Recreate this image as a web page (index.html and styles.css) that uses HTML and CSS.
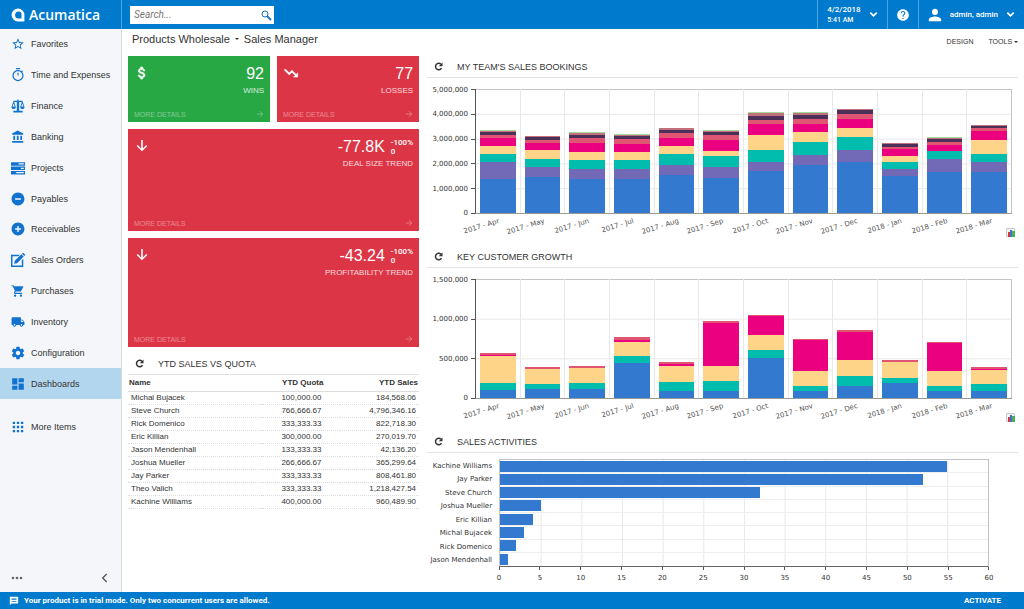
FILE: index.html
```html
<!DOCTYPE html>
<html lang="en">
<head>
    <meta charset="UTF-8">
    <meta name="viewport" content="width=device-width, initial-scale=1.0">
    <title>Sales Manager</title>
    <link rel="stylesheet" href="styles.css">
</head>
<body>
    <header class="topbar">
        <a class="logo" href="#">
            <svg class="logo-mark" viewBox="0 0 24 24"><path fill-rule="evenodd" d="M12 1a11 11 0 0 1 11 11v11H12A11 11 0 0 1 12 1zm1 5a6 6 0 1 0 0 12h5v-7a5 5 0 0 0-5-5z"/></svg>
            <span>Acumatica</span>
        </a>
        <form class="search">
            <input type="text" aria-label="Search" placeholder="Search...">
            <button type="button" aria-label="Search">
                <svg viewBox="0 0 12 12"><circle cx="5" cy="5" r="3"/><path d="M7 7l4 4"/></svg>
            </button>
        </form>
        <div class="topbar-right">
            <button class="top-item" type="button">
                <span class="clock"><span class="date">4/2/2018</span><span class="time">5:41 AM</span></span>
                <svg class="chevron" viewBox="0 0 10 10"><path d="M1.5 3L5 6.500 8.500 3"/></svg>
            </button>
            <button class="top-item help" type="button" aria-label="Help">
                <svg class="icon" viewBox="0 0 24 24"><path d="M12 2C6.480 2 2 6.480 2 12s4.480 10 10 10 10-4.480 10-10S17.520 2 12 2zm1 17h-2v-2h2v2zm2.070-7.750l-.9.920C13.450 12.900 13 13.500 13 15h-2v-.5c0-1.100.450-2.100 1.170-2.830l1.240-1.260c.370-.360.590-.860.590-1.410 0-1.100-.9-2-2-2s-2 .9-2 2H8c0-2.210 1.790-4 4-4s4 1.790 4 4c0 .880-.360 1.680-.930 2.250z"/></svg>
            </button>
            <button class="top-item user" type="button">
                <svg class="icon" viewBox="3 3 18 18"><path d="M12 12c2.210 0 4-1.790 4-4s-1.790-4-4-4-4 1.790-4 4 1.790 4 4 4zm0 2c-2.670 0-8 1.340-8 4v2h16v-2c0-2.660-5.330-4-8-4z"/></svg>
                <span>admin, admin</span>
                <svg class="chevron" viewBox="0 0 10 10"><path d="M1.5 3L5 6.500 8.500 3"/></svg>
            </button>
        </div>
    </header>

    <div class="layout">
        <nav class="sidebar">
            <ul class="menu">
                <li><a href="#"><svg viewBox="0 0 24 24"><path d="M22 9.240l-7.190-.620L12 2 9.190 8.630 2 9.240l5.460 4.730L5.820 21 12 17.270 18.180 21l-1.630-7.030L22 9.240zM12 15.400l-3.760 2.270 1-4.280-3.320-2.880 4.380-.380L12 6.100l1.710 4.040 4.380.380-3.320 2.880 1 4.280L12 15.400z"/></svg>Favorites</a></li>
                <li><a href="#"><svg viewBox="0 0 24 24"><path d="M15.500 0h-7v2.200h7V0zm3.530 6.890l1.420-1.420-1.410-1.410-1.420 1.420C16.070 4.240 14.120 3.500 12 3.500c-5.200 0-9.500 4.200-9.500 9.500s4.300 9.500 9.500 9.500 9.500-4.200 9.500-9.500c0-2.300-.8-4.500-2.470-6.110zM11 13h2V8h-2v5zm1 7.500c-4.100 0-7.500-3.400-7.500-7.500s3.400-7.500 7.500-7.500 7.500 3.400 7.500 7.500-3.400 7.500-7.500 7.500z"/></svg>Time and Expenses</a></li>
                <li><a href="#"><svg viewBox="0 0 24 24"><path d="M11 1h2v2h6.500l3.700 10.500c0 2.200-1.500 3.500-3.700 3.500s-3.700-1.300-3.700-3.500L18.600 5H14v15h6v3H4v-3h6V5H5.400l2.800 8.500c0 2.200-1.500 3.500-3.700 3.500S.8 15.700.8 13.500L4.500 3H11zM4.500 7.500l-2 5.500h4zm15 0l-2 5.500h4z"/></svg>Finance</a></li>
                <li><a href="#"><svg viewBox="0 0 24 24"><path d="M4 10v7h3v-7H4zm6 0v7h3v-7h-3zM2 22h19v-3H2v3zm14-12v7h3v-7h-3zm-4.500-9L2 6v2h19V6l-9.500-5z"/></svg>Banking</a></li>
                <li><a href="#"><svg viewBox="0 0 24 24"><path fill-rule="evenodd" d="M0 2h24v6H0zM13 4v2h9V4zM0 9.500h24v6H0zM17 11.500v2h5v-2zM0 17h24v6H0zM9 19v2h13v-2z"/></svg>Projects</a></li>
                <li><a href="#"><svg viewBox="0 0 24 24"><path d="M12 1C5.900 1 1 5.900 1 12s4.900 11 11 11 11-4.900 11-11S18.100 1 12 1zm5 12.200H7v-2.400h10v2.400z"/></svg>Payables</a></li>
                <li><a href="#"><svg viewBox="0 0 24 24"><path d="M12 1C5.900 1 1 5.900 1 12s4.900 11 11 11 11-4.900 11-11S18.100 1 12 1zm5 12.200h-3.800V17h-2.400v-3.800H7v-2.400h3.800V7h2.400v3.800H17v2.400z"/></svg>Receivables</a></li>
                <li><a href="#"><svg viewBox="0 0 24 24"><path d="M0 3h15l-2.500 2.500h-10v16h16v-9L21 10v14H0zM6.500 13.500L17.800 2.200l4 4L10.500 17.500 5.500 18.500zM18.800 1.200L20 0h1.500L24 2.500V4l-1.200 1.200z"/></svg>Sales Orders</a></li>
                <li><a href="#"><svg viewBox="0 0 24 24"><path d="M7 18c-1.100 0-1.990.9-1.990 2S5.900 22 7 22s2-.9 2-2-.9-2-2-2zM1 2v2h2l3.600 7.590-1.350 2.450c-.160.280-.250.610-.250.960 0 1.100.9 2 2 2h12v-2H7.420c-.140 0-.250-.110-.250-.250l.030-.120.9-1.630h7.450c.750 0 1.410-.410 1.750-1.030l3.580-6.490A1 1 0 0 0 20 4H5.210l-.940-2H1zm16 16c-1.100 0-1.990.9-1.990 2s.890 2 1.990 2 2-.9 2-2-.9-2-2-2z"/></svg>Purchases</a></li>
                <li><a href="#"><svg viewBox="0 0 24 24"><path d="M20 8h-3V4H3c-1.100 0-2 .9-2 2v11h2c0 1.660 1.340 3 3 3s3-1.340 3-3h6c0 1.660 1.340 3 3 3s3-1.340 3-3h2v-5l-3-4zM6 18.500c-.830 0-1.500-.670-1.500-1.500s.670-1.500 1.500-1.500 1.500.670 1.500 1.500-.670 1.500-1.500 1.500zm13.500-9l1.960 2.500H17V9.500h2.500zm-1.500 9c-.830 0-1.500-.670-1.500-1.500s.670-1.500 1.500-1.500 1.500.670 1.500 1.500-.670 1.500-1.500 1.500z"/></svg>Inventory</a></li>
                <li><a href="#"><svg viewBox="1 1 22 22"><path d="M19.430 12.980c.040-.320.070-.640.070-.980s-.030-.660-.070-.980l2.110-1.650c.190-.150.240-.420.120-.640l-2-3.460c-.120-.220-.390-.3-.610-.220l-2.490 1c-.520-.4-1.080-.730-1.690-.980l-.380-2.650C14.460 2.180 14.250 2 14 2h-4c-.250 0-.460.180-.490.420l-.380 2.650c-.610.250-1.170.590-1.690.980l-2.490-1c-.230-.090-.490 0-.610.220l-2 3.460c-.130.220-.070.490.120.640l2.110 1.650c-.040.320-.070.650-.070.980s.030.660.070.980l-2.110 1.650c-.190.150-.240.420-.120.640l2 3.460c.120.220.390.3.610.220l2.490-1c.520.4 1.080.730 1.690.980l.380 2.650c.030.240.240.420.490.420h4c.250 0 .460-.180.490-.420l.380-2.650c.610-.250 1.170-.590 1.690-.980l2.490 1c.230.090.490 0 .610-.220l2-3.460c.120-.220.070-.490-.120-.640l-2.110-1.650zM12 15.500c-1.930 0-3.500-1.570-3.500-3.500s1.570-3.500 3.500-3.500 3.500 1.570 3.500 3.500-1.570 3.500-3.500 3.500z"/></svg>Configuration</a></li>
                <li class="active"><a href="#"><svg viewBox="0 0 24 24"><path d="M2 13h9V2H2v11zm0 9h9v-7H2v7zm11 0h9V11h-9v11zm0-20v7h9V2h-9z"/></svg>Dashboards</a></li>
            </ul>
            <a class="more-items" href="#"><svg viewBox="0 0 24 24"><path d="M3 7h4V3H3v4zm7 14h4v-4h-4v4zm-7 0h4v-4H3v4zm0-7h4v-4H3v4zm7 0h4v-4h-4v4zm7-11v4h4V3h-4zm-7 4h4V3h-4v4zm7 7h4v-4h-4v4zm0 7h4v-4h-4v4z"/></svg>More Items</a>
            <div class="sidebar-bottom">
                <button type="button" aria-label="Menu settings"><svg viewBox="0 0 12 12"><circle cx="3" cy="6" r="1"/><circle cx="6" cy="6" r="1"/><circle cx="9" cy="6" r="1"/></svg></button>
                <button type="button" aria-label="Collapse"><svg class="collapse" viewBox="0 0 12 12"><path d="M8 3L5 6l3 3"/></svg></button>
            </div>
        </nav>

        <main class="content">
            <div class="titlebar">
                <a href="#">Products Wholesale</a>
                <span class="caret"></span>
                <h1>Sales Manager</h1>
                <div class="tools">
                    <a href="#">DESIGN</a>
                    <a href="#">TOOLS <span class="caret"></span></a>
                </div>
            </div>

            <div class="dashboard">
                <div class="column">
                    <div class="tiles">
                        <section class="tile green">
                            <svg class="tile-icon" viewBox="0 0 24 24"><path stroke="#fff" d="M11.800 10.900c-2.270-.590-3-1.200-3-2.150 0-1.090 1.010-1.850 2.700-1.850 1.780 0 2.440.850 2.500 2.100h2.210c-.070-1.720-1.120-3.300-3.210-3.810V3h-3v2.160c-1.940.420-3.500 1.680-3.500 3.610 0 2.310 1.910 3.460 4.700 4.130 2.500.6 3 1.480 3 2.410 0 .690-.490 1.790-2.700 1.790-2.060 0-2.870-.920-2.980-2.100h-2.200c.120 2.190 1.760 3.420 3.680 3.830V21h3v-2.150c1.950-.370 3.500-1.500 3.500-3.550 0-2.840-2.430-3.810-4.700-4.400z"/></svg>
                            <div class="value"><span class="number">92</span></div>
                            <h2>WINS</h2>
                            <a class="details" href="#">MORE DETAILS <svg viewBox="0 0 10 10"><path d="M1 5h7M5 1.500L8.500 5 5 8.500"/></svg></a>
                        </section>
                        <section class="tile">
                            <svg class="tile-icon" viewBox="0 0 24 24"><path stroke="#fff" d="M16 18l2.290-2.290-4.880-4.880-4 4L2 7.410 3.410 6l6 6 4-4 6.300 6.290L22 12v6z"/></svg>
                            <div class="value"><span class="number">77</span></div>
                            <h2>LOSSES</h2>
                            <a class="details" href="#">MORE DETAILS <svg viewBox="0 0 10 10"><path d="M1 5h7M5 1.500L8.500 5 5 8.500"/></svg></a>
                        </section>
                        <section class="tile wide deal">
                            <svg class="tile-icon" viewBox="0 0 24 24"><path d="M20 12l-1.600-1.600-5.200 5.200V3h-2.400v12.600l-5.200-5.200L4 12l8 8 8-8z"/></svg>
                            <div class="value"><span class="number">-77.8K</span><span class="delta">-100%<br>0</span></div>
                            <h2>DEAL SIZE TREND</h2>
                            <a class="details" href="#">MORE DETAILS <svg viewBox="0 0 10 10"><path d="M1 5h7M5 1.500L8.500 5 5 8.500"/></svg></a>
                        </section>
                        <section class="tile wide profit">
                            <svg class="tile-icon" viewBox="0 0 24 24"><path d="M20 12l-1.600-1.600-5.200 5.200V3h-2.400v12.600l-5.200-5.200L4 12l8 8 8-8z"/></svg>
                            <div class="value"><span class="number">-43.24</span><span class="delta">-100%<br>0</span></div>
                            <h2>PROFITABILITY TREND</h2>
                            <a class="details" href="#">MORE DETAILS <svg viewBox="0 0 10 10"><path d="M1 5h7M5 1.500L8.500 5 5 8.500"/></svg></a>
                        </section>
                    </div>

                    <section class="widget quota">
                        <header class="widget-header">
                            <button type="button" aria-label="Refresh"><svg viewBox="0 0 12 12"><path d="M10 8.300A4.300 4.300 0 1 1 9.300 3"/><path class="head" d="M11.300.5v5H6.300z"/></svg></button>
                            <h2>YTD SALES VS QUOTA</h2>
                        </header>
                        <table>
                            <thead>
                                <tr><th>Name</th><th>YTD Quota</th><th>YTD Sales</th></tr>
                            </thead>
                            <tbody>
                                <tr><td>Michal Bujacek</td><td>100,000.00</td><td>184,568.06</td></tr>
                                <tr><td>Steve Church</td><td>766,666.67</td><td>4,796,346.16</td></tr>
                                <tr><td>Rick Domenico</td><td>333,333.33</td><td>822,718.30</td></tr>
                                <tr><td>Eric Killian</td><td>300,000.00</td><td>270,019.70</td></tr>
                                <tr><td>Jason Mendenhall</td><td>133,333.33</td><td>42,136.20</td></tr>
                                <tr><td>Joshua Mueller</td><td>266,666.67</td><td>365,299.64</td></tr>
                                <tr><td>Jay Parker</td><td>333,333.33</td><td>808,461.80</td></tr>
                                <tr><td>Theo Valich</td><td>333,333.33</td><td>1,218,427.54</td></tr>
                                <tr><td>Kachine Williams</td><td>400,000.00</td><td>960,489.90</td></tr>
                            </tbody>
                        </table>
                    </section>
                </div>

                <div class="column">
                    <section class="widget bookings">
                        <header class="widget-header">
                            <button type="button" aria-label="Refresh"><svg viewBox="0 0 12 12"><path d="M10 8.300A4.300 4.300 0 1 1 9.300 3"/><path class="head" d="M11.300.5v5H6.300z"/></svg></button>
                            <h2>MY TEAM'S SALES BOOKINGS</h2>
                        </header>
                        <div class="chart" id="bookingsChart"></div>
                    </section>
                    <section class="widget growth">
                        <header class="widget-header">
                            <button type="button" aria-label="Refresh"><svg viewBox="0 0 12 12"><path d="M10 8.300A4.300 4.300 0 1 1 9.300 3"/><path class="head" d="M11.300.5v5H6.300z"/></svg></button>
                            <h2>KEY CUSTOMER GROWTH</h2>
                        </header>
                        <div class="chart" id="growthChart"></div>
                    </section>
                    <section class="widget">
                        <header class="widget-header">
                            <button type="button" aria-label="Refresh"><svg viewBox="0 0 12 12"><path d="M10 8.300A4.300 4.300 0 1 1 9.300 3"/><path class="head" d="M11.300.5v5H6.300z"/></svg></button>
                            <h2>SALES ACTIVITIES</h2>
                        </header>
                        <div class="hchart" id="activitiesChart"></div>
                    </section>
                </div>
            </div>
        </main>
    </div>

    <footer class="trial">
        <svg viewBox="0 0 24 24"><path d="M2 2h20v16H6l-4 4V2zm16 12v-2H6v2h12zm0-5V6H6v3h12z"/></svg>
        <span>Your product is in trial mode. Only two concurrent users are allowed.</span>
        <a href="#">ACTIVATE</a>
    </footer>

    <script src="script.js"></script>
</body>
</html>
```
FILE: styles.css
```css
* {
    box-sizing: border-box;
}
body {
    margin: 0;
    min-height: 100vh;
    display: flex;
    flex-direction: column;
    font-family: "Liberation Sans", Arial, sans-serif;
    font-size: 9px;
    color: #333;
    background-color: #fff;
}
a {
    color: inherit;
    text-decoration: none;
}
button {
    font: inherit;
    color: inherit;
    background: none;
    border: none;
    padding: 0;
    cursor: pointer;
}
h1, h2 {
    margin: 0;
    font-weight: normal;
}

/* top bar */
.topbar {
    display: flex;
    height: 29px;
    background-color: #007acc;
    color: #fff;
}
.logo {
    width: 122px;
    display: flex;
    align-items: center;
    gap: 4px;
    padding-left: 11px;
    border-right: 1px solid #4ea3dd;
    font-family: "Open Sans", sans-serif;
    font-size: 14px;
    font-weight: 600;
}
.logo-mark {
    width: 14px;
    height: 14px;
    fill: #fff;
}
.search {
    display: flex;
    align-items: center;
    align-self: center;
    width: 144px;
    height: 18px;
    margin-left: 8px;
    padding: 0 2px 0 4px;
    background-color: #fff;
}
.search input {
    flex: 1;
    min-width: 0;
    border: none;
    outline: none;
    padding: 0;
    font-family: Roboto, sans-serif;
    font-size: 10px;
    font-style: italic;
}
.search input::placeholder {
    color: #777;
}
.search button {
    display: flex;
}
.search svg {
    width: 12px;
    height: 12px;
    fill: none;
    stroke: #1b74c5;
    stroke-width: 1;
}
.search path {
    stroke-width: 2;
}
.topbar-right {
    display: flex;
    margin-left: auto;
    font-family: Roboto, sans-serif;
    font-size: 8px;
    font-weight: 500;
}
.top-item {
    display: flex;
    align-items: center;
    gap: 8px;
    padding: 0 9px;
    border-left: 1px solid #4ea3dd;
}
.top-item .icon {
    width: 14px;
    height: 14px;
    fill: #fff;
}
.help {
    padding: 0 8px;
}
.clock {
    display: flex;
    flex-direction: column;
    align-items: flex-start;
    line-height: 10px;
}
.time {
    font-size: 7px;
}
.chevron {
    width: 9px;
    height: 9px;
    fill: none;
    stroke: #fff;
    stroke-width: 2;
}

/* sidebar */
.layout {
    flex: 1;
    display: flex;
}
.sidebar {
    display: flex;
    flex-direction: column;
    width: 122px;
    background-color: #f4f6f9;
    border-right: 1px solid #d3dbe3;
}
.menu {
    display: grid;
    grid-auto-rows: 1fr;
    height: 370px;
    margin: 0;
    padding: 0;
    list-style: none;
}
.menu a, .more-items {
    display: flex;
    align-items: center;
    gap: 6px;
    height: 100%;
    padding-left: 11px;
}
.menu svg, .more-items svg {
    width: 14px;
    height: 14px;
    fill: #1173cf;
}
.menu .active {
    background-color: #b3d6ef;
}
.sidebar .more-items {
    height: 31px;
    margin-top: 12px;
}
.sidebar-bottom {
    display: flex;
    justify-content: space-between;
    margin-top: auto;
    padding: 6px 9px;
}
.sidebar-bottom button {
    display: flex;
}
.sidebar-bottom svg {
    width: 16px;
    height: 16px;
    fill: #666;
}
.sidebar-bottom .collapse {
    fill: none;
    stroke: #555;
}

/* page title */
.content {
    flex: 1;
    min-width: 0;
    padding: 0 6px;
}
.titlebar {
    display: flex;
    align-items: center;
    gap: 5px;
    height: 19px;
    margin-bottom: 8px;
    padding-left: 4px;
    font-size: 11px;
}
.titlebar h1 {
    font-size: 11px;
}
.caret {
    display: inline-block;
    border: 2px solid transparent;
    border-top-color: #333;
    border-bottom: none;
    vertical-align: middle;
}
.tools {
    display: flex;
    gap: 15px;
    margin-left: auto;
    padding-top: 6px;
    font-size: 7px;
}

/* dashboard */
.dashboard {
    display: grid;
    grid-template-columns: 33fr 67fr;
    gap: 8px;
}
.column {
    min-width: 0;
}
.tiles {
    display: grid;
    grid-template-columns: 1fr 1fr;
    gap: 7px;
}
.tile {
    display: grid;
    grid-template-columns: auto 1fr;
    grid-template-rows: 18px 12px 1fr;
    row-gap: 2px;
    min-height: 66px;
    padding: 9px 6px 4px;
    background-color: #dc3545;
    color: #fff;
}
.tile.green {
    background-color: #28a745;
}
.wide {
    grid-column: span 2;
}
.deal {
    min-height: 102px;
}
.profit {
    min-height: 109px;
}
.tile-icon {
    width: 16px;
    height: 16px;
    fill: #fff;
}
.value {
    display: flex;
    justify-content: flex-end;
    gap: 6px;
}
.number {
    font-size: 16px;
    line-height: 18px;
}
.delta {
    font-family: Roboto, sans-serif;
    font-size: 8px;
    font-weight: 500;
    line-height: 9px;
}
.tile h2 {
    grid-column: 1 / -1;
    font-size: 8px;
    line-height: 12px;
    text-align: right;
    opacity: 0.8;
}
.details {
    grid-column: 1 / -1;
    align-self: end;
    display: flex;
    align-items: center;
    justify-content: space-between;
    font-size: 7px;
    opacity: 0.4;
}
.details svg {
    width: 8px;
    height: 8px;
    fill: none;
    stroke: #fff;
}

/* widgets */
.widget-header {
    display: flex;
    align-items: center;
    gap: 14px;
    height: 22px;
    padding-left: 7px;
    border-bottom: 1px solid #e3e3e3;
}
.widget-header h2 {
    font-size: 9px;
}
.widget-header button {
    display: flex;
}
.widget-header svg {
    width: 9px;
    height: 9px;
    fill: none;
    stroke: #333;
    stroke-width: 2;
}
.widget-header .head {
    fill: #333;
    stroke: none;
}
.quota {
    margin-top: 6px;
}
.quota table {
    width: 100%;
    border-collapse: collapse;
    font-size: 8px;
}
.quota th, .quota td {
    width: 27%;
    text-align: right;
}
.quota th {
    height: 16px;
    padding: 0 1px;
    border-bottom: 1px solid #ddd;
}
.quota td {
    height: 13px;
    padding: 0 3px;
    line-height: 11px;
    border-bottom: 1px dotted #ddd;
}
.quota th:nth-child(2) {
    padding-right: 17px;
}
.quota td:nth-child(2) {
    padding-right: 19px;
}
.quota th:first-child, .quota td:first-child {
    width: 46%;
    text-align: left;
}

/* charts */
.chart, .hchart {
    font-family: "DejaVu Sans", Verdana, sans-serif;
    font-size: 7px;
    line-height: 8px;
}
.chart {
    position: relative;
    display: grid;
    grid-template-columns: 48px 1fr;
    padding: 11px 6px 0 0;
}
.bookings .chart {
    height: 168px;
    grid-template-rows: 125px 1fr;
}
.growth .chart {
    height: 163px;
    grid-template-rows: 120px 1fr;
}
.y-axis {
    display: flex;
    flex-direction: column;
    justify-content: space-between;
    margin: -4px 0;
}
.y-axis span {
    display: flex;
    align-items: center;
    justify-content: flex-end;
    gap: 3px;
    height: 9px;
}
.y-axis span::after {
    content: "";
    width: 4px;
    height: 1px;
    background-color: #555;
}
.plot {
    display: flex;
    border-left: 1px solid #555;
    border-bottom: 1px solid #999;
    background-image: linear-gradient(#e8e8e8 1px, transparent 1px);
    background-size: 100% calc(100% / var(--rows));
    box-shadow: inset 0 1px #c4c4c4;
}
.stack {
    flex: 1;
    display: flex;
    flex-direction: column-reverse;
    padding: 0 4px;
    border-right: 1px solid #e8e8e8;
}
.stack:last-child {
    border-right-color: #c4c4c4;
}
.blue { background-color: #3479d0; }
.purple { background-color: #736ab7; }
.teal { background-color: #00bdae; }
.yellow { background-color: #fed488; }
.pink { background-color: #eb007f; }
.rose { background-color: #e05672; }
.plum { background-color: #4d3059; }
.dusty { background-color: #c0717c; }
.lime { background-color: #a3dc9a; }
.x-axis {
    grid-column: 2;
    display: flex;
    padding-top: 3px;
}
.x-axis div {
    flex: 1;
    width: 0;
    display: flex;
    justify-content: flex-end;
    padding-right: 4%;
}
.x-axis span {
    height: 8px;
    white-space: nowrap;
    color: #555;
    transform: rotate(-17deg);
    transform-origin: right top;
}
.chart-menu {
    position: absolute;
    right: 3px;
    bottom: 9px;
    display: flex;
}
.chart-menu svg {
    width: 9px;
    height: 9px;
}

/* horizontal bars */
.hchart {
    display: grid;
    grid-template-columns: 65px 1fr;
    column-gap: 7px;
    padding: 6px 29px 0 0;
}
.names {
    display: grid;
    grid-auto-rows: 1fr;
    align-items: center;
    text-align: right;
    white-space: nowrap;
}
.rows {
    display: grid;
    grid-auto-rows: 1fr;
    height: 108px;
    border: 1px solid #c4c4c4;
    border-bottom-color: #666;
    background-image: linear-gradient(90deg, #e8e8e8 1px, transparent 1px);
    background-size: calc(100% / 12) 100%;
}
.row {
    display: flex;
    align-items: center;
    border-bottom: 1px solid #eee;
}
.row:last-child {
    border-bottom: none;
}
.bar {
    height: 11px;
    background-color: #3479d0;
}
.scale {
    grid-column: 2;
    display: flex;
    justify-content: space-between;
}
.scale span {
    display: flex;
    flex-direction: column;
    align-items: center;
    gap: 4px;
    width: 0;
}
.scale span::before {
    content: "";
    flex: none;
    width: 1px;
    height: 3px;
    background-color: #555;
}

/* trial message */
.trial {
    display: flex;
    align-items: center;
    gap: 5px;
    height: 17px;
    padding: 0 23px 0 9px;
    background-color: #007acc;
    color: #fff;
    font-family: Roboto, sans-serif;
    font-size: 8px;
    font-weight: bold;
}
.trial svg {
    width: 10px;
    height: 10px;
    fill: #fff;
}
.trial a {
    margin-left: auto;
}
```
FILE: script.js
```js
const months = ['2017 - Apr', '2017 - May', '2017 - Jun', '2017 - Jul', '2017 - Aug', '2017 - Sep',
    '2017 - Oct', '2017 - Nov', '2017 - Dec', '2018 - Jan', '2018 - Feb', '2018 - Mar'];

// values in thousands, bottom segment first
const bookings = [
    [1384, 659, 323, 323, 349, 94, 148, 20, 35],
    [1438, 403, 349, 363, 255, 148, 108, 54, 0],
    [1371, 417, 349, 309, 390, 202, 121, 81, 40],
    [1371, 390, 390, 296, 323, 215, 134, 30, 54],
    [1519, 417, 444, 323, 336, 188, 121, 81, 0],
    [1398, 444, 457, 202, 430, 215, 108, 65, 30],
    [1694, 363, 470, 605, 457, 161, 148, 134, 40],
    [1922, 417, 524, 417, 323, 188, 148, 81, 54],
    [2043, 484, 524, 363, 390, 175, 161, 54, 0],
    [1478, 282, 309, 215, 296, 94, 94, 40, 0],
    [1640, 524, 323, 20, 222, 148, 94, 67, 20],
    [1640, 403, 349, 551, 349, 121, 81, 60, 0]
];
const growth = [
    [97, 88, 344, 15, 30],
    [113, 59, 197, 0, 20],
    [118, 76, 181, 0, 32],
    [437, 88, 181, 27, 31],
    [92, 109, 202, 29, 21],
    [92, 122, 185, 542, 25],
    [500, 109, 189, 235, 15],
    [88, 63, 193, 391, 15],
    [147, 134, 197, 358, 20],
    [193, 59, 197, 5, 20],
    [88, 59, 193, 348, 18],
    [92, 80, 185, 15, 25]
];
const activities = [
    ['Kachine Williams', 55], ['Jay Parker', 52], ['Steve Church', 32], ['Joshua Mueller', 5],
    ['Eric Killian', 4], ['Michal Bujacek', 3], ['Rick Domenico', 2], ['Jason Mendenhall', 1]
];

function stackedChart(id, data, colors, step, rows) {
    const max = step * rows;
    let labels = '';
    for (let i = rows; i >= 0; i--) {
        labels += `<span>${(i * step * 1000).toLocaleString('en-US')}</span>`;
    }
    const stacks = data.map(values => {
        const parts = values.map((v, i) => `<div class="${colors[i]}" style="height: ${v / max * 100}%"></div>`);
        return `<div class="stack">${parts.join('')}</div>`;
    });
    document.getElementById(id).innerHTML = `
        <div class="y-axis">${labels}</div>
        <div class="plot" style="--rows: ${rows}">${stacks.join('')}</div>
        <div class="x-axis">${months.map(m => `<div><span>${m}</span></div>`).join('')}</div>
        <button class="chart-menu" type="button" aria-label="Chart options">
            <svg viewBox="0 0 9 9">
                <path fill="#f4f4f4" stroke="#ccc" d="M.5.5h8v8h-8z"/>
                <path fill="#d9363e" d="M2 4h2v5H2z"/>
                <path fill="#3479d0" d="M4 2h2v7H4z"/>
                <path fill="#4cae4c" d="M6 3h3v6H6z"/>
            </svg>
        </button>`;
}

function activitiesChart(max) {
    let scale = '';
    for (let i = 0; i <= max; i += 5) {
        scale += `<span>${i}</span>`;
    }
    const names = activities.map(a => `<div>${a[0]}</div>`).join('');
    const rows = activities.map(a => `<div class="row"><div class="bar" style="width: ${a[1] / max * 100}%"></div></div>`).join('');
    document.getElementById('activitiesChart').innerHTML =
        `<div class="names">${names}</div><div class="rows">${rows}</div><div class="scale">${scale}</div>`;
}

stackedChart('bookingsChart', bookings, ['blue', 'purple', 'teal', 'yellow', 'pink', 'rose', 'plum', 'dusty', 'lime'], 1000, 5);
stackedChart('growthChart', growth, ['blue', 'teal', 'yellow', 'pink', 'rose'], 500, 3);
activitiesChart(60);
```
